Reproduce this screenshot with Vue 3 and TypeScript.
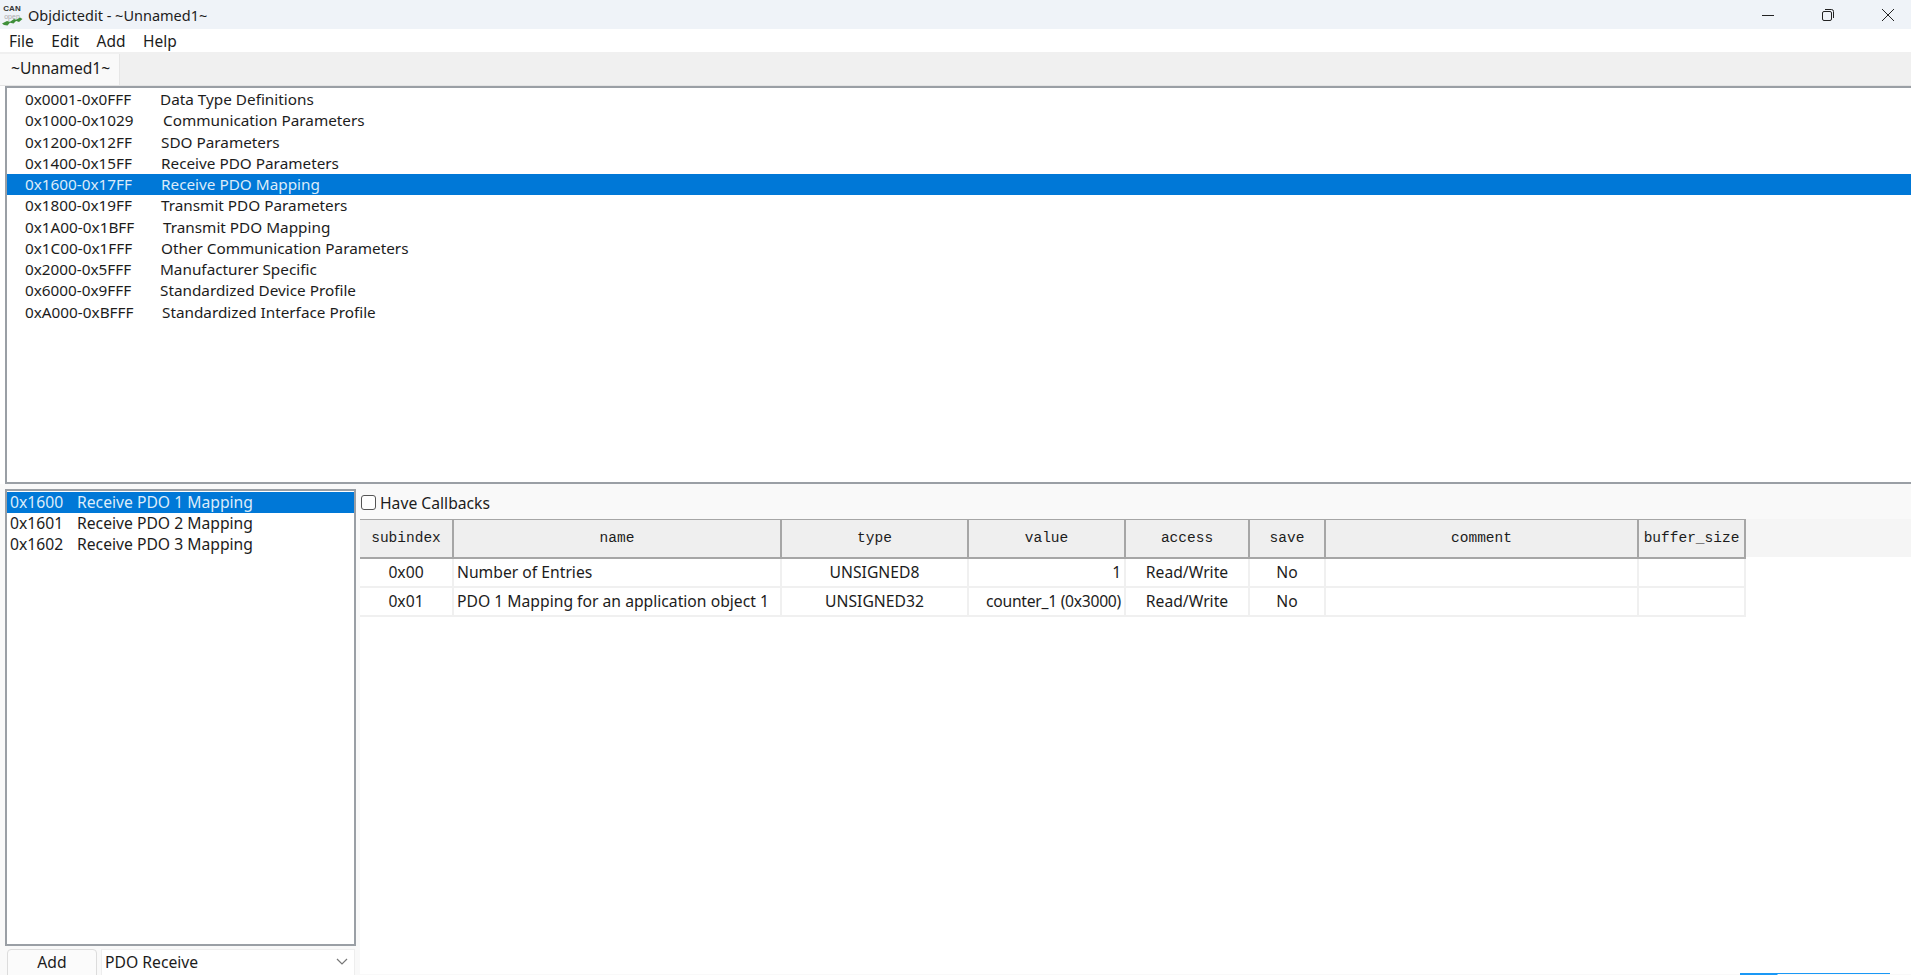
<script setup lang="ts">
interface Range { range: string; name: string; x: number }
const ranges: Range[] = [
  { range: '0x0001-0x0FFF', name: 'Data Type Definitions', x: 135 },
  { range: '0x1000-0x1029', name: 'Communication Parameters', x: 138 },
  { range: '0x1200-0x12FF', name: 'SDO Parameters', x: 136 },
  { range: '0x1400-0x15FF', name: 'Receive PDO Parameters', x: 136 },
  { range: '0x1600-0x17FF', name: 'Receive PDO Mapping', x: 136 },
  { range: '0x1800-0x19FF', name: 'Transmit PDO Parameters', x: 136 },
  { range: '0x1A00-0x1BFF', name: 'Transmit PDO Mapping', x: 138 },
  { range: '0x1C00-0x1FFF', name: 'Other Communication Parameters', x: 136 },
  { range: '0x2000-0x5FFF', name: 'Manufacturer Specific', x: 135 },
  { range: '0x6000-0x9FFF', name: 'Standardized Device Profile', x: 135 },
  { range: '0xA000-0xBFFF', name: 'Standardized Interface Profile', x: 137 },
]
const entries = [
  ['0x1600', 'Receive PDO 1 Mapping'],
  ['0x1601', 'Receive PDO 2 Mapping'],
  ['0x1602', 'Receive PDO 3 Mapping'],
]
const columns = [
  { label: 'subindex', w: 93 },
  { label: 'name', w: 328 },
  { label: 'type', w: 187 },
  { label: 'value', w: 157 },
  { label: 'access', w: 124 },
  { label: 'save', w: 76 },
  { label: 'comment', w: 313 },
  { label: 'buffer_size', w: 107 },
]
const rows = [
  ['0x00', 'Number of Entries', 'UNSIGNED8', '1', 'Read/Write', 'No', '', ''],
  ['0x01', 'PDO 1 Mapping for an application object 1', 'UNSIGNED32', 'counter_1 (0x3000)', 'Read/Write', 'No', '', ''],
]
const menus = ['File', 'Edit', 'Add', 'Help']
</script>

<template>
  <div class="win">
    <header class="titlebar">
      <svg class="logo" width="22" height="24" viewBox="0 0 22 24">
        <text x="11" y="8" text-anchor="middle" font-size="8" font-weight="700" font-family="Liberation Sans, sans-serif" fill="#333">CAN</text>
        <text x="11" y="15.5" text-anchor="middle" font-size="7" font-family="Liberation Sans, sans-serif" fill="#a8a8a8">open</text>
        <path d="M1 20.5l5-2.5 3.5 1-3 3.5-3.5-.5zM8 19.5l5-3.5 3 1-3.5 3.5zM14 17.5l5-3 2.5 1.5-3.5 3z" fill="#3f8f3a" />
      </svg>
      <span class="title">Objdictedit - ~Unnamed1~</span>
      <div class="controls">
        <svg width="14" height="14" viewBox="0 0 14 14"><path d="M1 7.5h12" stroke="#222" fill="none" /></svg>
        <svg width="14" height="14" viewBox="0 0 14 14"><rect x="1.5" y="3.5" width="9" height="9" rx="1.5" fill="none" stroke="#222" /><path d="M4 1.5h6.5a2 2 0 0 1 2 2V10" fill="none" stroke="#222" /></svg>
        <svg width="14" height="14" viewBox="0 0 14 14"><path d="M1 1l12 12M13 1L1 13" stroke="#222" fill="none" /></svg>
      </div>
    </header>
    <nav class="menubar">
      <span v-for="m in menus" :key="m" class="menu">{{ m }}</span>
    </nav>
    <div class="tabstrip"><div class="tab">~Unnamed1~</div></div>

    <section class="ranges">
      <div v-for="(r, i) in ranges" :key="r.range" class="range-row" :class="{ sel: i === 4 }">
        <span class="range" :style="{ width: r.x + 'px' }">{{ r.range }}</span><span>{{ r.name }}</span>
      </div>
    </section>

    <main class="lower">
      <aside class="left">
        <div class="entries">
          <div v-for="(e, i) in entries" :key="e[0]" class="entry" :class="{ sel: i === 0 }">
            <span class="eid">{{ e[0] }}</span><span>{{ e[1] }}</span>
          </div>
        </div>
        <div class="adders">
          <button class="add">Add</button>
          <div class="combo">
            <span>PDO Receive</span>
            <svg width="12" height="8" viewBox="0 0 12 8"><path d="M1 1l5 5 5-5" fill="none" stroke="#777" stroke-width="1.2" /></svg>
          </div>
        </div>
      </aside>
      <div class="right">
        <label class="callbacks"><span class="check"></span>Have Callbacks</label>
        <div class="tablewrap">
          <table>
            <colgroup><col v-for="c in columns" :key="c.label" :style="{ width: c.w + 'px' }" /></colgroup>
            <thead>
              <tr><th v-for="c in columns" :key="c.label">{{ c.label }}</th></tr>
            </thead>
            <tbody>
              <tr v-for="row in rows" :key="row[0]">
                <td v-for="(cell, j) in row" :key="j" :class="{ l: j === 1, r: j === 3 }">{{ cell }}</td>
              </tr>
            </tbody>
          </table>
        </div>
        <div class="progress"></div>
      </div>
    </main>
  </div>
</template>

<style>
html, body { margin: 0; background: #fff; overflow: hidden; }
</style>

<style scoped>
.win {
  width: 1911px;
  height: 975px;
  display: flex;
  flex-direction: column;
  overflow: hidden;
  font-family: "Noto Sans", "Open Sans", sans-serif;
  font-size: 15.3px;
  color: #1c1c1c;
  background: #fff;
}
.titlebar {
  height: 29px;
  flex: none;
  background: #eff3f8;
  display: flex;
  align-items: center;
  padding-left: 1px;
}
.logo { margin-top: 1px; }
.title { margin-left: 5px; font-size: 14.5px; margin-top: 1px; }
.controls {
  margin-left: auto;
  display: flex;
  gap: 46px;
  padding-right: 16px;
}
.menubar {
  height: 23px;
  flex: none;
  display: flex;
  gap: 17.5px;
  padding-left: 9px;
  align-items: center;
  background: #fff;
}
.menu { font-size: 15.5px; }
.tabstrip {
  height: 34px;
  flex: none;
  background: #f0f0f0;
  padding-top: 2px;
  box-sizing: border-box;
  display: flex;
  border-bottom: 1px solid #e4e4e4;
}
.tab {
  width: 120px;
  background: #f9f9f9;
  padding-left: 11px;
  box-sizing: border-box;
  line-height: 28px;
  font-size: 15.6px;
  border-right: 1px solid #e6e6e6;
}
.ranges {
  height: 398px;
  flex: none;
  margin-left: 5px;
  box-sizing: border-box;
  border: 1px solid #9a9fa5;
  border-width: 2px 0 2px 2px;
  padding-top: 1px;
  background: #fff;
}
.range-row {
  height: 21.25px;
  line-height: 21.25px;
  padding-left: 18px;
  display: flex;
  white-space: nowrap;
}
.range { flex: none; }
.sel { background: #0078d7; color: #dcecfa; }
.lower {
  flex: 1;
  min-height: 0;
  display: flex;
  padding-top: 5px;
  background: #f9f9f9;
  font-size: 15.7px;
}
.left {
  width: 356px;
  flex: none;
  margin-left: 5px;
  display: flex;
  flex-direction: column;
}
.entries {
  height: 457px;
  flex: none;
  box-sizing: border-box;
  border: 2px solid #9a9fa5;
  background: #fff;
  padding-top: 1px;
  width: 351px;
}
.entry {
  height: 21px;
  line-height: 21px;
  padding-left: 3px;
  display: flex;
  white-space: nowrap;
}
.eid { width: 67px; flex: none; }
.adders {
  display: flex;
  gap: 4px;
  padding: 3px 0 0 2px;
}
.add {
  width: 90px;
  height: 30px;
  box-sizing: border-box;
  border: 1px solid #dcdcdc;
  border-radius: 4px;
  background: #fbfbfb;
  font: inherit;
  color: inherit;
  padding: 0 0 4px;
}
.combo {
  width: 254px;
  height: 30px;
  box-sizing: border-box;
  background: #fff;
  border: 1px solid #eee;
  display: flex;
  align-items: center;
  justify-content: space-between;
  padding: 0 6px 4px 3px;
}
.right {
  flex: 1;
  min-width: 0;
  position: relative;
  margin-left: -1px;
}
.callbacks {
  height: 30px;
  display: flex;
  align-items: center;
  padding-bottom: 3px;
  box-sizing: border-box;
}
.check {
  width: 15px;
  height: 15px;
  box-sizing: border-box;
  border: 1px solid #555;
  border-radius: 3px;
  background: #fff;
  margin-right: 4px;
  margin-left: 1px;
}
.tablewrap {
  height: 455px;
  background: linear-gradient(#f5f5f5 38px, #fff 38px);
}
table {
  table-layout: fixed;
  width: 1385px;
  border-collapse: collapse;
}
th {
  height: 38px;
  padding: 0;
  box-sizing: border-box;
  background: #efefef;
  border: 1px solid #a6a6a6;
  border-width: 1px 2px 2px 0;
  font-family: "Liberation Mono", monospace;
  font-size: 14.5px;
  font-weight: 400;
  white-space: nowrap;
}
td {
  height: 29px;
  padding: 0 3px;
  box-sizing: border-box;
  text-align: center;
  border: 1px solid #f0f0f0;
  border-width: 0 2px 2px 0;
  white-space: nowrap;
  background: #fff;
}
td.l { text-align: left; }
td.r { text-align: right; letter-spacing: -0.28px; }
.progress {
  position: absolute;
  right: 21px;
  bottom: 0;
  width: 150px;
  height: 2px;
  background:
    linear-gradient(#1a98f5, #1a98f5) top / 100% 1px no-repeat,
    linear-gradient(#1a98f5, #1a98f5) bottom left / 25% 1px no-repeat;
}
</style>
